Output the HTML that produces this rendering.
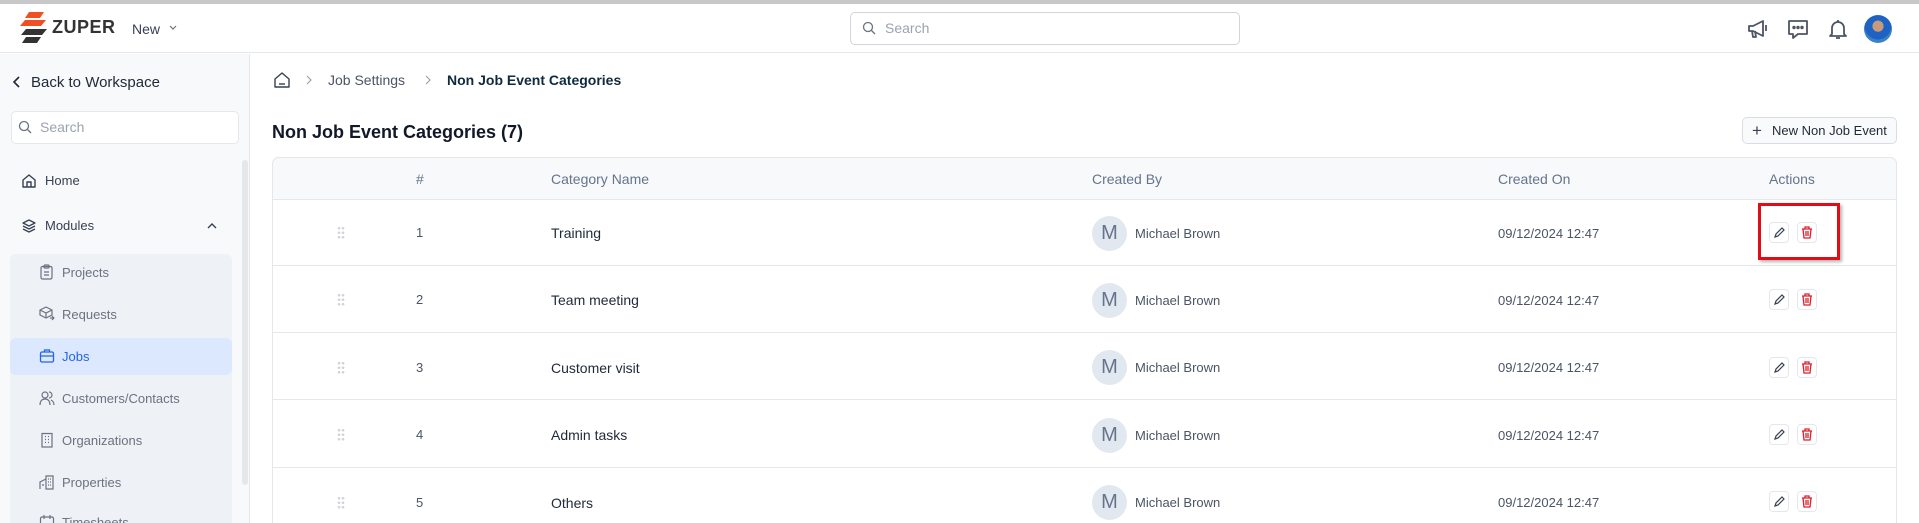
<!DOCTYPE html>
<html><head><meta charset="utf-8"><style>
*{box-sizing:border-box;margin:0;padding:0}
html,body{width:1919px;height:523px;overflow:hidden}
body{background:#fff;font-family:"Liberation Sans",Arial,sans-serif;position:relative;color:#1f2937}
.a{position:absolute}
.top{left:0;top:0;width:1919px;height:4px;background:#c8c8c8}
.hdr{left:0;top:4px;width:1919px;height:49px;border-bottom:1px solid #e5e7eb;background:#fff}
.side{left:0;top:54px;width:250px;height:560px;background:#f8f9fb;border-right:1px solid #e5e7eb}
.t{white-space:nowrap}
.sub{left:10px;top:254px;width:222px;height:380px;background:#eef1f6;border-radius:6px}
.mi{font-size:13px;color:#6b7280}
.row{left:272px;width:1625px;border-bottom:1px solid #e5e7eb}
.cell{font-size:14px;color:#1f2937}
.btn{width:20px;height:21px;border:1px solid #e5e7eb;border-radius:4px;background:#fff}
.dr{position:absolute;left:337px;width:8px;height:14px;background:radial-gradient(circle,#d1d5db 1.2px,transparent 1.5px) 0 0/4px 4.5px}
.av{position:absolute;left:1092px;width:35px;height:35px;border-radius:50%;background:#e2e8f0;color:#64748b;font-size:20px;text-align:center;line-height:35px}
.nm{position:absolute;left:1135px;font-size:13px;color:#4b5563;white-space:nowrap}
.dt{position:absolute;left:1498px;font-size:13px;color:#4b5563;white-space:nowrap}
.eb{position:absolute;left:1769px}
.db{position:absolute;left:1797px}
</style></head><body>
<div class="a top"></div>
<div class="a hdr"></div>
<svg class="a" style="left:20px;top:12px" width="32" height="32" viewBox="0 0 32 32">
<polygon points="9,0 24,0 20,6 5,6" fill="#f04e23"/>
<polygon points="5,8 26,8 21,14 0,14" fill="#f04e23"/>
<polygon points="6,17 27,17 22,23 1,23" fill="#333"/>
<polygon points="6,25 21,25 17,31 2,31" fill="#333"/>
</svg>
<div class="a t" style="left:52px;top:17px;font-size:18px;font-weight:bold;color:#333;letter-spacing:0.5px">ZUPER</div>
<div class="a t" style="left:132px;top:21px;font-size:14px;color:#374151">New</div>
<svg class="a" style="left:168px;top:24px" width="10" height="8" viewBox="0 0 10 8"><path d="M2 2l3 3 3-3" stroke="#6b7280" fill="none" stroke-width="1.2"/></svg>
<div class="a" style="left:850px;top:12px;width:390px;height:33px;border:1px solid #d1d5db;border-radius:5px;background:#fff"></div>
<svg class="a" style="left:862px;top:21px" width="15" height="15" viewBox="0 0 15 15"><circle cx="6" cy="6" r="4.5" stroke="#6b7280" fill="none" stroke-width="1.3"/><path d="M9.5 9.5L13 13" stroke="#6b7280" stroke-width="1.3"/></svg>
<div class="a t" style="left:885px;top:20px;font-size:14px;color:#9ca3af">Search</div>
<svg class="a" style="left:1746px;top:17px" width="24" height="24" viewBox="0 0 24 24" fill="none" stroke="#4b5563" stroke-width="1.8" stroke-linejoin="round"><path d="M3 9h4l10-5v15L7 14H3z"/><path d="M6 14l1 6h3l-1-6"/><path d="M20 8v6"/></svg>
<svg class="a" style="left:1786px;top:17px" width="24" height="24" viewBox="0 0 24 24" fill="none" stroke="#4b5563" stroke-width="1.8" stroke-linejoin="round"><path d="M3 4h18v13h-9l-5 4v-4H3z"/><circle cx="8" cy="10.5" r="0.8" fill="#4b5563"/><circle cx="12" cy="10.5" r="0.8" fill="#4b5563"/><circle cx="16" cy="10.5" r="0.8" fill="#4b5563"/></svg>
<svg class="a" style="left:1826px;top:17px" width="24" height="24" viewBox="0 0 24 24" fill="none" stroke="#4b5563" stroke-width="1.8" stroke-linejoin="round"><path d="M6 17V11a6 6 0 0112 0v6l2 2H4z"/><path d="M10 21h4"/><path d="M12 3v2"/></svg>
<div class="a" style="left:1864px;top:15px;width:28px;height:28px;border-radius:50%;background:radial-gradient(circle at 50% 40%,#c89a7a 0 25%,#1e63c4 26% 60%,#3b82c4 61%)"></div>
<div class="a side"></div>
<svg class="a" style="left:12px;top:75px" width="10" height="14" viewBox="0 0 10 14"><path d="M7 2L2 7l5 5" stroke="#1f2937" fill="none" stroke-width="1.6"/></svg>
<div class="a t" style="left:31px;top:74px;font-size:15px;color:#1f2937">Back to Workspace</div>
<div class="a" style="left:11px;top:111px;width:228px;height:33px;border:1px solid #e5e7eb;border-radius:5px;background:#fff"></div>
<svg class="a" style="left:18px;top:120px" width="15" height="15" viewBox="0 0 15 15"><circle cx="6" cy="6" r="4.5" stroke="#6b7280" fill="none" stroke-width="1.3"/><path d="M9.5 9.5L13 13" stroke="#6b7280" stroke-width="1.3"/></svg>
<div class="a t" style="left:40px;top:119px;font-size:14px;color:#9ca3af">Search</div>
<div class="a" style="left:242px;top:160px;width:6px;height:325px;background:#e5e7eb;border-radius:3px"></div>
<svg class="a" style="left:21px;top:173px" width="16" height="16" viewBox="0 0 16 16" fill="none" stroke="#374151" stroke-width="1.4" stroke-linejoin="round"><path d="M2 7l6-5 6 5v7H2z"/><path d="M6 14V9h4v5"/></svg>
<div class="a t mi" style="left:45px;top:173px;color:#374151">Home</div>
<svg class="a" style="left:21px;top:218px" width="16" height="16" viewBox="0 0 16 16" fill="none" stroke="#374151" stroke-width="1.3" stroke-linejoin="round"><path d="M8 2l6 3-6 3-6-3z"/><path d="M2 8l6 3 6-3"/><path d="M2 11l6 3 6-3"/></svg>
<div class="a t mi" style="left:45px;top:218px;color:#374151">Modules</div>
<svg class="a" style="left:206px;top:221px" width="12" height="10" viewBox="0 0 12 10"><path d="M2 7l4-4 4 4" stroke="#374151" fill="none" stroke-width="1.4"/></svg>
<div class="a sub"></div>
<div class="a" style="left:10px;top:338px;width:222px;height:37px;background:#dbe8fd;border-radius:6px"></div>
<svg class="a" style="left:39px;top:264px" width="15" height="16" viewBox="0 0 15 16" fill="none" stroke="#6b7280" stroke-width="1.2"><rect x="2" y="2.5" width="11" height="12.5" rx="1.5"/><rect x="5" y="1" width="5" height="3" rx="1"/><path d="M5 8h5M5 11h5"/></svg>
<div class="a t mi" style="left:62px;top:265px">Projects</div>
<svg class="a" style="left:39px;top:306px" width="16" height="16" viewBox="0 0 16 16" fill="none" stroke="#6b7280" stroke-width="1.2" stroke-linejoin="round"><path d="M7 1l6 3v5l-6 3-6-3V4z"/><path d="M1 4l6 3 6-3M7 7v5"/><path d="M11 12h4M13 10l2 2-2 2"/></svg>
<div class="a t mi" style="left:62px;top:307px">Requests</div>
<svg class="a" style="left:39px;top:348px" width="16" height="16" viewBox="0 0 16 16" fill="none" stroke="#2563eb" stroke-width="1.3"><rect x="1.5" y="4" width="13" height="10" rx="1.5"/><path d="M5.5 4V2h5v2M1.5 8h13"/></svg>
<div class="a t mi" style="left:62px;top:349px;color:#2563eb">Jobs</div>
<svg class="a" style="left:39px;top:390px" width="16" height="16" viewBox="0 0 16 16" fill="none" stroke="#6b7280" stroke-width="1.2"><circle cx="6" cy="5" r="3"/><path d="M1 15c0-4 2-6 5-6s5 2 5 6"/><path d="M10 2a3 3 0 010 6M12 10c2 1 3 3 3 5"/></svg>
<div class="a t mi" style="left:62px;top:391px">Customers/Contacts</div>
<svg class="a" style="left:39px;top:432px" width="16" height="16" viewBox="0 0 16 16" fill="none" stroke="#6b7280" stroke-width="1.2"><rect x="3" y="1.5" width="10" height="13.5"/><path d="M6 4.5h1M9 4.5h1M6 7.5h1M9 7.5h1M6 10.5h1M9 10.5h1"/></svg>
<div class="a t mi" style="left:62px;top:433px">Organizations</div>
<svg class="a" style="left:39px;top:474px" width="16" height="16" viewBox="0 0 16 16" fill="none" stroke="#6b7280" stroke-width="1.2"><path d="M7 15V2h7v13zM1 15V8l6-3"/><path d="M9 5h1M11 5h1M9 8h1M11 8h1M9 11h1M11 11h1M3 11h2"/></svg>
<div class="a t mi" style="left:62px;top:475px">Properties</div>
<svg class="a" style="left:39px;top:514px" width="16" height="16" viewBox="0 0 16 16" fill="none" stroke="#6b7280" stroke-width="1.2"><rect x="1.5" y="3" width="13" height="12" rx="1.5"/><path d="M5 1v4M11 1v4"/></svg>
<div class="a t mi" style="left:62px;top:515px">Timesheets</div>
<svg class="a" style="left:273px;top:71px" width="18" height="18" viewBox="0 0 18 18" fill="none" stroke="#374151" stroke-width="1.4" stroke-linejoin="round"><path d="M2 8l7-6 7 6v8H2z"/><path d="M6 13h6"/></svg>
<svg class="a" style="left:305px;top:74px" width="8" height="12" viewBox="0 0 8 12"><path d="M2 2l4 4-4 4" stroke="#9ca3af" fill="none" stroke-width="1.2"/></svg>
<div class="a t" style="left:328px;top:72px;font-size:14px;color:#4b5563">Job Settings</div>
<svg class="a" style="left:424px;top:74px" width="8" height="12" viewBox="0 0 8 12"><path d="M2 2l4 4-4 4" stroke="#9ca3af" fill="none" stroke-width="1.2"/></svg>
<div class="a t" style="left:447px;top:72px;font-size:14px;color:#0f2a3d;font-weight:bold">Non Job Event Categories</div>
<div class="a t" style="left:272px;top:122px;font-size:18px;color:#111827;font-weight:bold">Non Job Event Categories (7)</div>
<div class="a" style="left:1742px;top:117px;width:155px;height:27px;border:1px solid #d9dee6;border-radius:5px;background:#f9fafb"></div>
<div class="a t" style="left:1752px;top:121px;font-size:17px;color:#374151">+</div>
<div class="a t" style="left:1772px;top:123px;font-size:13px;color:#1f2937">New Non Job Event</div>
<div class="a" style="left:272px;top:157px;width:1625px;height:480px;border:1px solid #e5e7eb;border-radius:7px"></div>
<div class="a row" style="top:157px;height:43px;background:#f8f9fb;border-radius:7px 7px 0 0;border:1px solid #e5e7eb"></div>
<div class="a t" style="left:416px;top:171px;font-size:14px;color:#64748b">#</div>
<div class="a t" style="left:551px;top:171px;font-size:14px;color:#64748b">Category Name</div>
<div class="a t" style="left:1092px;top:171px;font-size:14px;color:#64748b">Created By</div>
<div class="a t" style="left:1498px;top:171px;font-size:14px;color:#64748b">Created On</div>
<div class="a t" style="left:1769px;top:171px;font-size:14px;color:#64748b">Actions</div>
<div class="a row" style="top:200px;height:66px"></div>
<div class="a row" style="top:266px;height:67px"></div>
<div class="a row" style="top:333px;height:67px"></div>
<div class="a row" style="top:400px;height:68px"></div>
<div class="a t cell" style="left:416px;top:225px;font-size:13px;color:#4b5563">1</div>
<div class="a t cell" style="left:551px;top:225px">Training</div>
<div class="a t cell" style="left:416px;top:292px;font-size:13px;color:#4b5563">2</div>
<div class="a t cell" style="left:551px;top:292px">Team meeting</div>
<div class="a t cell" style="left:416px;top:360px;font-size:13px;color:#4b5563">3</div>
<div class="a t cell" style="left:551px;top:360px">Customer visit</div>
<div class="a t cell" style="left:416px;top:427px;font-size:13px;color:#4b5563">4</div>
<div class="a t cell" style="left:551px;top:427px">Admin tasks</div>
<div class="a t cell" style="left:416px;top:495px;font-size:13px;color:#4b5563">5</div>
<div class="a t cell" style="left:551px;top:495px">Others</div>
<div class="dr" style="top:226px"></div><div class="dr" style="top:293px"></div><div class="dr" style="top:361px"></div><div class="dr" style="top:428px"></div><div class="dr" style="top:496px"></div>
<div class="av" style="top:216px">M</div><div class="nm" style="top:226px">Michael Brown</div><div class="dt" style="top:226px">09/12/2024 12:47</div>
<div class="av" style="top:283px">M</div><div class="nm" style="top:293px">Michael Brown</div><div class="dt" style="top:293px">09/12/2024 12:47</div>
<div class="av" style="top:350px">M</div><div class="nm" style="top:360px">Michael Brown</div><div class="dt" style="top:360px">09/12/2024 12:47</div>
<div class="av" style="top:418px">M</div><div class="nm" style="top:428px">Michael Brown</div><div class="dt" style="top:428px">09/12/2024 12:47</div>
<div class="av" style="top:485px">M</div><div class="nm" style="top:495px">Michael Brown</div><div class="dt" style="top:495px">09/12/2024 12:47</div>
<div class="a btn eb" style="top:222px"></div><div class="a btn db" style="top:222px"></div>
<div class="a btn eb" style="top:289px"></div><div class="a btn db" style="top:289px"></div>
<div class="a btn eb" style="top:357px"></div><div class="a btn db" style="top:357px"></div>
<div class="a btn eb" style="top:424px"></div><div class="a btn db" style="top:424px"></div>
<div class="a btn eb" style="top:491px"></div><div class="a btn db" style="top:491px"></div>
<svg class="a" style="left:1769px;top:222px" width="20" height="290" viewBox="0 0 20 290" fill="none" stroke="#374151" stroke-width="1.2">
<g id="pe"><path d="M6 15l1-3 6-6 2 2-6 6z"/></g>
<use href="#pe" y="67"/><use href="#pe" y="135"/><use href="#pe" y="202"/><use href="#pe" y="269"/>
</svg>
<svg class="a" style="left:1797px;top:222px" width="20" height="290" viewBox="0 0 20 290" fill="none" stroke="#e11d2a" stroke-width="1.3">
<g id="tr"><path d="M5 7h10M8 7V5h4v2M6 7l1 9h6l1-9M9 9v5M11 9v5"/></g>
<use href="#tr" y="67"/><use href="#tr" y="135"/><use href="#tr" y="202"/><use href="#tr" y="269"/>
</svg>
<div class="a" style="left:1758px;top:203px;width:82px;height:57px;border:3px solid #e00d16;box-shadow:2px 2px 3px rgba(0,0,0,0.3)"></div>
</body></html>
